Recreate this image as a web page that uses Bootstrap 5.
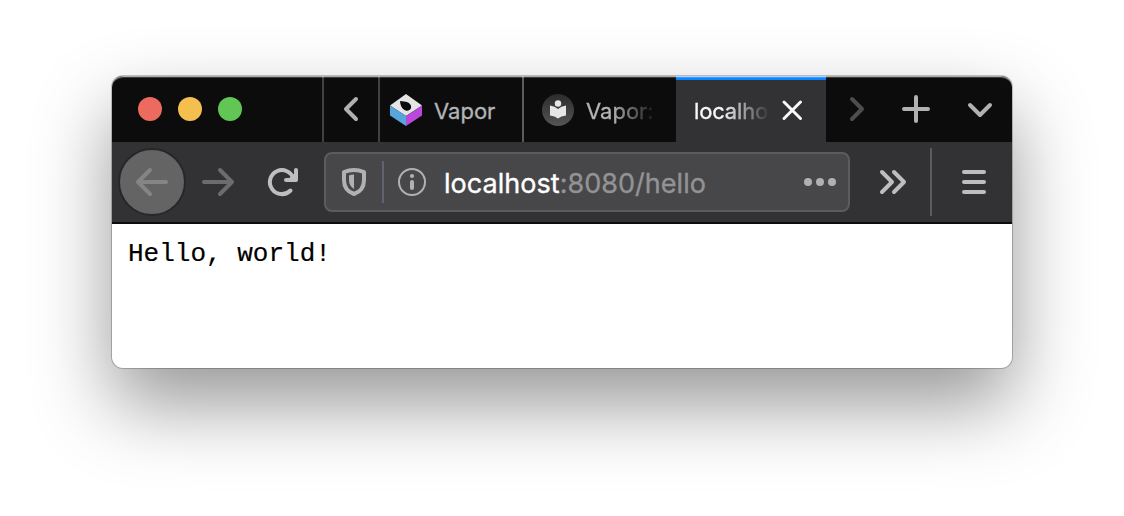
<!DOCTYPE html>
<html lang="en">
<head>
<meta charset="utf-8">
<title>localhost:8080/hello</title>
<link href="https://cdn.jsdelivr.net/npm/bootstrap@5.3.0/dist/css/bootstrap.min.css" rel="stylesheet">
<style>
body{background:#fff;font-family:Inter,"Liberation Sans",sans-serif;height:516px;padding:76px 0 0 112px;overflow:hidden}
.browser{width:900px;height:292px;border-radius:11px;box-shadow:0 0 0 1px rgba(0,0,0,.22),0 36px 78px rgba(0,0,0,.41)}
.browser::after{content:"";position:absolute;inset:0;border-radius:11px;pointer-events:none;border-top:1px solid rgba(255,255,255,.65);box-shadow:inset 0 1px 0 rgba(255,255,255,.2)}
.tabstrip{height:66px;background:#0c0c0d;flex:none}
.lights{width:210px;padding-left:26px;gap:16px}
.light{width:24px;height:24px}
.rule{width:2px;background:#414142;flex:none}
.rule.mid{background:#5b5b5c}
svg{display:block;flex:none}
.stroke{fill:none;stroke:#b1b1b1;stroke-width:4;stroke-linecap:round;stroke-linejoin:round}
.tab-text{font-size:22px;line-height:30px;color:#b4b4b5;white-space:nowrap;padding-top:3px;flex:none;-webkit-text-stroke:.3px}
.fade-a{width:74px;-webkit-mask-image:linear-gradient(90deg,#000 35%,transparent 96%);mask-image:linear-gradient(90deg,#000 35%,transparent 96%)}
.fade-b{width:76px;color:#f9f9fa;letter-spacing:-.15px;-webkit-mask-image:linear-gradient(90deg,#000 38%,transparent);mask-image:linear-gradient(90deg,#000 38%,transparent)}
.tab-active{width:150px;background:#323234;border-top:4px solid #0a84ff}
.toolbar-main{height:82px;background:#323234;border-bottom:2px solid #0c0c0d;flex:none}
.urlbar{width:526px;height:60px;background:#474749;border:2px solid #5c5c5e;border-radius:8px}
.url{font-size:27px;line-height:36px;color:#939395;padding-top:3px;letter-spacing:.03px;white-space:nowrap;width:350px;-webkit-text-stroke:.35px}
.url b{font-weight:400;color:#fff}
.page pre{font:26px/32px "Liberation Mono",monospace;color:#000;padding:14px 16px;-webkit-text-stroke:.2px}
</style>
</head>
<body>
<main class="browser position-relative d-flex flex-column overflow-hidden bg-white">
  <div class="tabstrip d-flex">
    <div class="lights d-flex align-items-center">
      <span class="light rounded-circle" style="background:#ed6a5e"></span>
      <span class="light rounded-circle" style="background:#f5bf4f"></span>
      <span class="light rounded-circle" style="background:#61c654"></span>
    </div>
    <div class="rule"></div>
    <svg width="54" height="66" viewBox="324 76 54 66"><path class="stroke" d="M356 99l-10 10 10 10"/></svg>
    <div class="rule"></div>
    <div class="d-flex align-items-center" style="width:142px">
      <svg width="54" height="66" viewBox="380 76 54 66">
        <path fill="#e4e4e4" d="M406 94l16 11.500-16 10.500-16-10.500z"/><path fill="#56a5db" d="M390 105.500l16 10.500v10l-16-10.500z"/><path fill="#ba48dc" d="M422 105.500l-16 10.500v10l16-10.500z"/>
        <path fill="#0a0a0a" d="M400 101c3 .6 5 .2 7.500 1.200 3 1.200 4.300 4 3.300 6.300-1 2.200-4 2.800-6.300 1.500-3-1.700-4.300-5-4.500-9z"/>
      </svg>
      <span class="tab-text">Vapor</span>
    </div>
    <div class="rule mid"></div>
    <div class="d-flex align-items-center" style="width:152px">
      <svg width="62" height="66" viewBox="524 76 62 66">
        <defs><linearGradient id="disc" x2="0" y2="1"><stop stop-color="#2b2b2b"/><stop offset="1" stop-color="#555"/></linearGradient></defs>
        <circle cx="558" cy="110" r="16" fill="url(#disc)"/><circle cx="558" cy="103.500" r="3.200" fill="#e6e6e6"/>
        <path fill="#e6e6e6" d="M550 105.500q5 .5 8 3.500 3-3 8-3.500v10q-5 .5-8 3-3-2.500-8-3z"/>
      </svg>
      <span class="tab-text fade-a">Vapor:</span>
    </div>
    <div class="tab-active d-flex">
      <span class="tab-text fade-b" style="margin-left:18px;margin-top:13px">localho</span>
      <svg width="56" height="62" viewBox="770 80 56 62"><path class="stroke" style="stroke:#f9f9fa;stroke-width:3" d="M784 102l16.500 16.500M800.500 102L784 118.500"/></svg>
    </div>
    <svg width="186" height="66" viewBox="826 76 186 66">
      <path class="stroke" style="stroke:#4d4d4e" d="M852 99l10 10-10 10"/><path class="stroke" d="M916 97v24M904 109h24M970 105l10 10 10-10"/>
    </svg>
  </div>
  <div class="toolbar-main d-flex align-items-center">
    <svg width="212" height="80" viewBox="112 142 212 80">
      <circle cx="152" cy="182" r="33" fill="#646464" stroke="#272729" stroke-width="2"/>
      <path class="stroke" style="stroke:#858585" d="M150 170l-12 12 12 12M138 182h28"/>
      <path class="stroke" style="stroke:#6c6c6d" d="M220 170l12 12-12 12M232 182h-28"/>
      <path class="stroke" style="stroke:#bebebf" d="M290.500 190.500A12 12 0 1 1 293.500 179"/><path class="stroke" style="stroke:#bebebf" d="M296 170v10h-10"/><path fill="#bebebf" d="M296 172v8h-9z"/>
    </svg>
    <div class="urlbar d-flex align-items-center">
      <svg width="118" height="56" viewBox="326 154 118 56">
        <path class="stroke" d="M354 170q5 0 10 2v8c0 7-4 12-10 14-6-2-10-7-10-14v-8q5-2 10-2z"/>
        <path fill="#b1b1b1" d="M354 174.500v14.500q-5-3-5-9v-4.500q2-1 5-1z"/>
        <path fill="#5f6370" d="M382 161h2v42h-2z"/>
        <circle cx="412" cy="182" r="13" fill="none" stroke="#b1b1b1" stroke-width="2"/><circle cx="412" cy="176" r="2.100" fill="#b1b1b1"/><path class="stroke" d="M412 182v6"/>
      </svg>
      <div class="url"><b>localhost</b>:8080/hello</div>
      <svg width="54" height="56" viewBox="794 154 54 56" fill="#b1b1b1"><circle cx="808" cy="182" r="4"/><circle cx="820" cy="182" r="4"/><circle cx="832" cy="182" r="4"/></svg>
    </div>
    <svg width="162" height="80" viewBox="850 142 162 80">
      <path class="stroke" style="stroke:#bebebf" d="M882 172l10 10-10 10M894 172l10 10-10 10M964 172h20M964 182h20M964 192h20"/>
      <path fill="#5b5b5d" d="M930 148h2v68h-2z"/>
    </svg>
  </div>
  <div class="page flex-fill"><pre class="m-0">Hello, world!</pre></div>
</main>
<script src="https://cdn.jsdelivr.net/npm/bootstrap@5.3.0/dist/js/bootstrap.bundle.min.js"></script>
</body>
</html>
